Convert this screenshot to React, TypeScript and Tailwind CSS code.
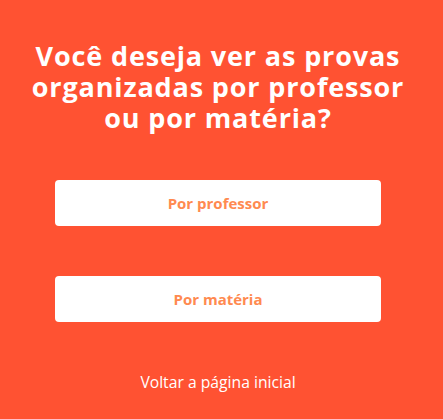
export default function App() {
  return (
    <div
      className="min-h-[419px] w-full bg-[#ff5232] flex flex-col items-center pt-[40px]"
      style={{ fontFamily: '"Open Sans", Lato, sans-serif' }}
    >
      <div className="w-[443px] flex flex-col items-center pr-[7px]">
        <h1 className="text-white font-bold text-[27px] leading-[31px] text-center tracking-[0.85px] whitespace-nowrap">
          Você deseja ver as provas
          <br />
          organizadas por professor
          <br />
          ou por matéria?
        </h1>
        <button className="mt-[47px] w-[326px] h-[46px] bg-white rounded-[4px] text-[#ff8a50] font-bold text-[15px]">
          Por professor
        </button>
        <button className="mt-[50px] w-[326px] h-[46px] bg-white rounded-[4px] text-[#ff8a50] font-bold text-[15px]">
          Por matéria
        </button>
        <a className="mt-[49px] text-white text-[15.7px] font-normal">Voltar a página inicial</a>
      </div>
    </div>
  );
}
